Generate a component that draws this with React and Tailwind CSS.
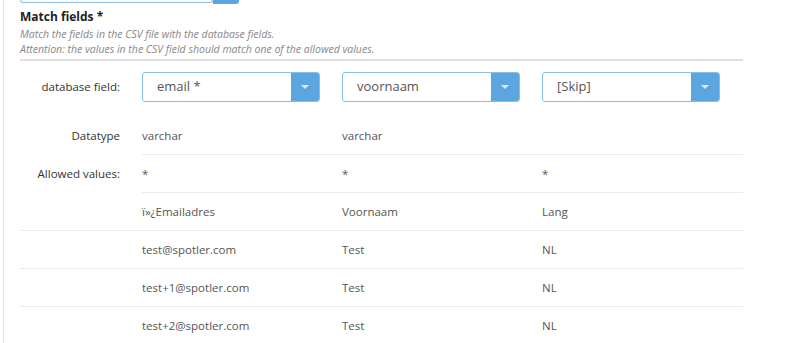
import React from "react";

const cols = [
  { field: "email *", type: "varchar", allowed: "*" },
  { field: "voornaam", type: "varchar", allowed: "*" },
  { field: "[Skip]", type: "", allowed: "*" },
];

const rows = [
  ["ï»¿Emailadres", "Voornaam", "Lang"],
  ["test@spotler.com", "Test", "NL"],
  ["test+1@spotler.com", "Test", "NL"],
  ["test+2@spotler.com", "Test", "NL"],
];

function Select({ value }) {
  return (
    <div className="flex h-[30px] w-[178px] rounded-[3px] border border-[#8dbde3] bg-white">
      <div className="flex flex-1 items-center pl-[14px] text-[13px] text-[#555]">{value}</div>
      <div className="flex w-[28px] items-center justify-center rounded-r-[2px] bg-[#5ba6de]">
        <div className="h-0 w-0 border-x-[4px] border-t-[4px] border-x-transparent border-t-[#d8ebf8]" />
      </div>
    </div>
  );
}

export default function App() {
  return (
    <div
      className="h-[343px] w-[800px] overflow-hidden bg-white"
      style={{ fontFamily: "'Open Sans', 'Noto Sans', sans-serif" }}
    >
      <div className="ml-[3px] h-full border-l border-[#e4e4e4] pl-[16px]">
        <div className="flex">
          <div className="h-[3px] w-[193px] rounded-b-[3px] border-x border-b border-[#8dbde3]" />
          <div className="h-[4px] w-[26px] rounded-br-[3px] bg-[#5ba6de]" />
        </div>
        <div className="w-[723px]">
          <div className="mt-[5px] text-[12px] font-bold leading-[16px] text-[#222]">Match fields *</div>
          <div className="mt-[2px] text-[10.5px] italic leading-[15px] text-[#888]">
            <div>Match the fields in the CSV file with the database fields.</div>
            <div>Attention: the values in the CSV field should match one of the allowed values.</div>
          </div>
          <div className="mt-[2px] h-[2px] bg-[#e0e0e0]" />

          <div className="flex h-[56px] items-center pb-[5px]">
            <div className="w-[100px] text-right text-[11.5px] text-[#333]">database field:</div>
            <div className="ml-[22px] flex gap-[22px]">
              {cols.map((c, i) => (
                <Select key={i} value={c.field} />
              ))}
            </div>
          </div>

          <div className="flex h-[38px] items-center">
            <div className="w-[100px] text-right text-[11.5px] text-[#333]">Datatype</div>
            <div className="ml-[22px] flex h-full flex-1 items-center border-b border-[#ebebeb]">
              {cols.map((c, i) => (
                <div key={i} className="w-[200px] text-[11.5px] text-[#555]">{c.type}</div>
              ))}
            </div>
          </div>
          <div className="flex h-[38px] items-center">
            <div className="w-[100px] text-right text-[11.5px] text-[#333]">Allowed values:</div>
            <div className="ml-[22px] flex h-full flex-1 items-center border-b border-[#ebebeb]">
              {cols.map((c, i) => (
                <div key={i} className="w-[200px] text-[11.5px] text-[#555]">{c.allowed}</div>
              ))}
            </div>
          </div>

          {rows.map((r, i) => (
            <div key={i} className="flex h-[38px] items-center border-b border-[#ebebeb]">
              <div className="w-[122px]" />
              {r.map((c, j) => (
                <div key={j} className="w-[200px] text-[11.5px] text-[#555]">{c}</div>
              ))}
            </div>
          ))}
        </div>
      </div>
    </div>
  );
}
